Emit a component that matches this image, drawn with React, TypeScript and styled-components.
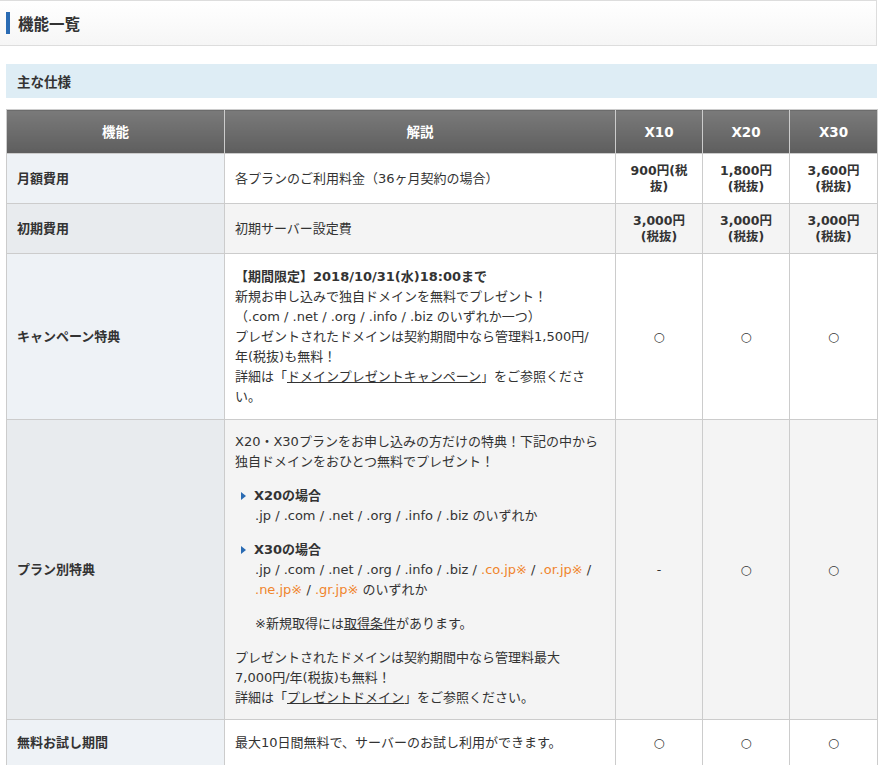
import styled, { createGlobalStyle } from 'styled-components';

const Global = createGlobalStyle`
  body {
    margin: 0;
    background: #fff;
    font-family: "DejaVu Sans", "Noto Sans CJK JP", sans-serif;
    font-size: 13px;
    color: #333;
  }
`;

const Page = styled.div`
  width: 877px;
  padding-bottom: 40px;
`;

const TitleBox = styled.div`
  height: 44px;
  border: 1px solid #ddd;
  border-left: none;
  background: linear-gradient(#fff, #f6f6f6);
  display: flex;
  align-items: center;
  padding-left: 6px;
`;

const TitleBar = styled.span`
  width: 4px;
  height: 22px;
  background: #2a6bb3;
  margin-right: 8px;
`;

const TitleText = styled.h1`
  margin: 0;
  font-size: 15.5px;
  font-weight: bold;
  color: #333;
`;

const Section = styled.div`
  margin: 18px 0 0 6px;
  height: 34px;
  background: #deedf5;
  display: flex;
  align-items: center;
  padding-left: 11px;
  font-weight: bold;
  font-size: 13.5px;
`;

const Table = styled.table`
  margin: 11px 0 0 6px;
  width: 871px;
  border-collapse: collapse;
  table-layout: fixed;
  line-height: 20px;
`;

const Th = styled.th`
  height: 41px;
  background: linear-gradient(#7a7a7a, #5e5e5e);
  color: #fff;
  font-weight: bold;
  border: 1px solid #ccc;
  font-size: 13.5px;
`;

const Tr = styled.tr<{ $alt?: boolean }>`
  background: ${(p) => (p.$alt ? '#f4f4f4' : '#fff')};
`;

const Name = styled.td<{ $alt?: boolean }>`
  background: ${(p) => (p.$alt ? '#e8ebee' : '#eef2f6')};
  border: 1px solid #ccc;
  font-weight: bold;
  padding: 0 10px;
`;

const Desc = styled.td<{ $h?: number }>`
  border: 1px solid #ccc;
  padding: 7px 14px 7px 10px;
  height: ${(p) => (p.$h ? p.$h - 15 : 35)}px;
`;

const Val = styled.td<{ $bold?: boolean }>`
  border: 1px solid #ccc;
  text-align: center;
  font-weight: ${(p) => (p.$bold ? 'bold' : 'normal')};
  line-height: 16px;
  font-size: 12.5px;
`;

const P = styled.p`
  margin: 0 0 14px;
  &:last-child { margin-bottom: 0; }
`;

const Sub = styled.div`
  padding-left: 6px;
  margin-bottom: 14px;
`;

const SubHead = styled.div`
  font-weight: bold;
  display: flex;
  align-items: center;
  &::before {
    content: '';
    border-left: 5px solid #2a6bb3;
    border-top: 4px solid transparent;
    border-bottom: 4px solid transparent;
    margin-right: 8px;
  }
`;

const SubBody = styled.div`
  padding-left: 14px;
`;

const Orange = styled.span`
  color: #f0852d;
`;

const Link = styled.span`
  text-decoration: underline;
`;

const plans = ['X10', 'X20', 'X30'];

export default function App() {
  return (
    <Page>
      <Global />
      <TitleBox>
        <TitleBar />
        <TitleText>機能一覧</TitleText>
      </TitleBox>
      <Section>主な仕様</Section>
      <Table>
        <colgroup>
          <col style={{ width: 218 }} />
          <col style={{ width: 391 }} />
          <col style={{ width: 87 }} />
          <col style={{ width: 87 }} />
          <col style={{ width: 88 }} />
        </colgroup>
        <thead>
          <tr>
            <Th>機能</Th>
            <Th>解説</Th>
            {plans.map((p) => (
              <Th key={p}>{p}</Th>
            ))}
          </tr>
        </thead>
        <tbody>
          <Tr>
            <Name>月額費用</Name>
            <Desc>各プランのご利用料金（36ヶ月契約の場合）</Desc>
            <Val $bold>900円(税<br />抜)</Val>
            <Val $bold>1,800円<br />(税抜)</Val>
            <Val $bold>3,600円<br />(税抜)</Val>
          </Tr>
          <Tr $alt>
            <Name $alt>初期費用</Name>
            <Desc>初期サーバー設定費</Desc>
            <Val $bold>3,000円<br />(税抜)</Val>
            <Val $bold>3,000円<br />(税抜)</Val>
            <Val $bold>3,000円<br />(税抜)</Val>
          </Tr>
          <Tr>
            <Name>キャンペーン特典</Name>
            <Desc $h={166}>
              <b>【期間限定】2018/10/31(水)18:00まで</b>
              <br />
              新規お申し込みで独自ドメインを無料でプレゼント！
              <br />
              （.com / .net / .org / .info / .biz のいずれか一つ）
              <br />
              プレゼントされたドメインは契約期間中なら管理料1,500円/
              <br />
              年(税抜)も無料！
              <br />
              詳細は「<Link>ドメインプレゼントキャンペーン</Link>」をご参照ください。
            </Desc>
            <Val>○</Val>
            <Val>○</Val>
            <Val>○</Val>
          </Tr>
          <Tr $alt>
            <Name $alt>プラン別特典</Name>
            <Desc $h={300}>
              <P>X20・X30プランをお申し込みの方だけの特典！下記の中から独自ドメインをおひとつ無料でプレゼント！</P>
              <Sub>
                <SubHead>X20の場合</SubHead>
                <SubBody>.jp / .com / .net / .org / .info / .biz のいずれか</SubBody>
              </Sub>
              <Sub>
                <SubHead>X30の場合</SubHead>
                <SubBody>
                  .jp / .com / .net / .org / .info / .biz / <Orange>.co.jp※</Orange> / <Orange>.or.jp※</Orange> /{' '}
                  <Orange>.ne.jp※</Orange> / <Orange>.gr.jp※</Orange> のいずれか
                </SubBody>
              </Sub>
              <Sub>
                <SubBody>※新規取得には<Link>取得条件</Link>があります。</SubBody>
              </Sub>
              <P>
                プレゼントされたドメインは契約期間中なら管理料最大
                <br />
                7,000円/年(税抜)も無料！
                <br />
                詳細は「<Link>プレゼントドメイン</Link>」をご参照ください。
              </P>
            </Desc>
            <Val>-</Val>
            <Val>○</Val>
            <Val>○</Val>
          </Tr>
          <Tr>
            <Name>無料お試し期間</Name>
            <Desc $h={47}>最大10日間無料で、サーバーのお試し利用ができます。</Desc>
            <Val>○</Val>
            <Val>○</Val>
            <Val>○</Val>
          </Tr>
        </tbody>
      </Table>
    </Page>
  );
}
